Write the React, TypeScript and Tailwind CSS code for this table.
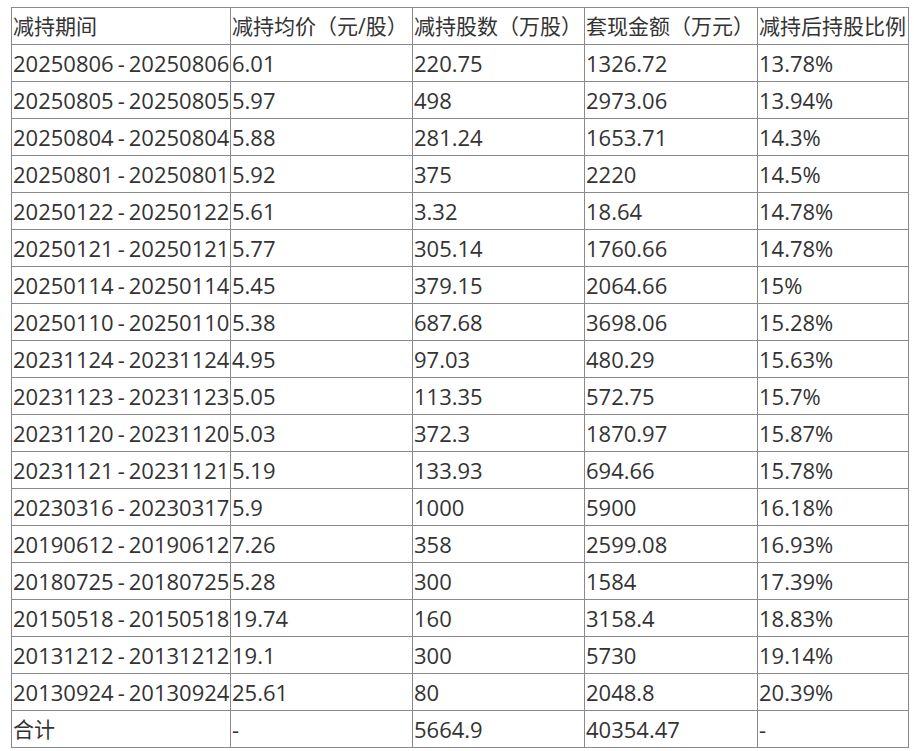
import React from "react";

const header = ["减持期间", "减持均价（元/股）", "减持股数（万股）", "套现金额（万元）", "减持后持股比例"];

const rows: string[][] = [
  ["20250806-20250806", "6.01", "220.75", "1326.72", "13.78%"],
  ["20250805-20250805", "5.97", "498", "2973.06", "13.94%"],
  ["20250804-20250804", "5.88", "281.24", "1653.71", "14.3%"],
  ["20250801-20250801", "5.92", "375", "2220", "14.5%"],
  ["20250122-20250122", "5.61", "3.32", "18.64", "14.78%"],
  ["20250121-20250121", "5.77", "305.14", "1760.66", "14.78%"],
  ["20250114-20250114", "5.45", "379.15", "2064.66", "15%"],
  ["20250110-20250110", "5.38", "687.68", "3698.06", "15.28%"],
  ["20231124-20231124", "4.95", "97.03", "480.29", "15.63%"],
  ["20231123-20231123", "5.05", "113.35", "572.75", "15.7%"],
  ["20231120-20231120", "5.03", "372.3", "1870.97", "15.87%"],
  ["20231121-20231121", "5.19", "133.93", "694.66", "15.78%"],
  ["20230316-20230317", "5.9", "1000", "5900", "16.18%"],
  ["20190612-20190612", "7.26", "358", "2599.08", "16.93%"],
  ["20180725-20180725", "5.28", "300", "1584", "17.39%"],
  ["20150518-20150518", "19.74", "160", "3158.4", "18.83%"],
  ["20131212-20131212", "19.1", "300", "5730", "19.14%"],
  ["20130924-20130924", "25.61", "80", "2048.8", "20.39%"],
  ["合计", "-", "5664.9", "40354.47", "-"],
];

function Cell({ text }: { text: string }) {
  const cjk = /[\u4e00-\u9fff]/.test(text);
  const isDate = /^\d{8}-\d{8}$/.test(text);
  return (
    <div
      className={
        "box-border flex h-[37px] items-center whitespace-nowrap border-l border-t border-[#8a8a8a] pl-[1px] leading-none " +
        (cjk ? "text-[21px]" : "text-[22px]")
      }
    >
      {isDate ? (
        <>
          {text.slice(0, 8)}
          <span className="mx-[4px]">-</span>
          {text.slice(9)}
        </>
      ) : (
        text
      )}
    </div>
  );
}

export default function App() {
  const all = [header, ...rows];
  return (
    <div
      className="min-h-[751px] w-[914px] bg-white pt-[7px] pl-[11px]"
      style={{ fontFamily: '"Open Sans", "Noto Sans CJK SC", sans-serif' }}
    >
      <div className="grid w-fit grid-cols-[219px_182px_172px_173px_151px] border-r border-b border-[#8a8a8a] text-[#333333]">
        {all.map((r, i) => r.map((c, j) => <Cell key={i + "-" + j} text={c} />))}
      </div>
    </div>
  );
}
